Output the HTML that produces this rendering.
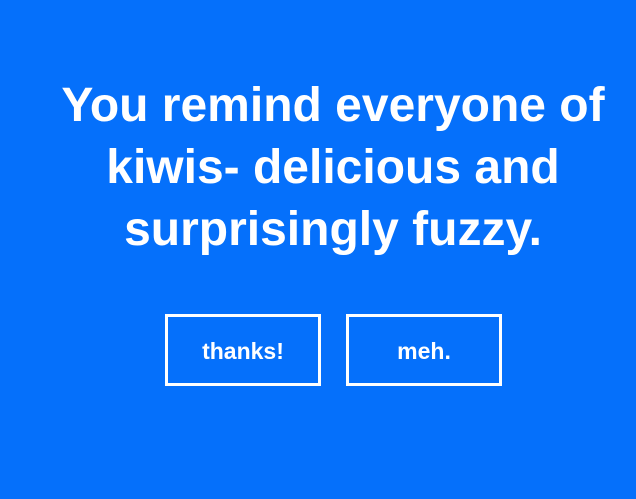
<!DOCTYPE html>
<html><head><meta charset="utf-8"><style>
html,body{margin:0;padding:0;}
body{width:636px;height:499px;background:#0570fb;font-family:"Liberation Sans",Arial,sans-serif;color:#fff;overflow:hidden;position:relative;}
h1{position:absolute;left:30px;width:606px;top:75px;margin:0;text-align:center;font-size:48px;line-height:62px;font-weight:bold;}
.b{position:absolute;top:314px;width:150px;border:3px solid #fff;display:flex;align-items:center;justify-content:center;font-weight:bold;font-size:23px;padding-top:3px;box-sizing:content-box;height:63px;}
</style></head><body>
<h1>You remind everyone of<br>kiwis- delicious and<br>surprisingly fuzzy.</h1>
<div class="b" style="left:165px">thanks!</div>
<div class="b" style="left:346px">meh.</div>
</body></html>
